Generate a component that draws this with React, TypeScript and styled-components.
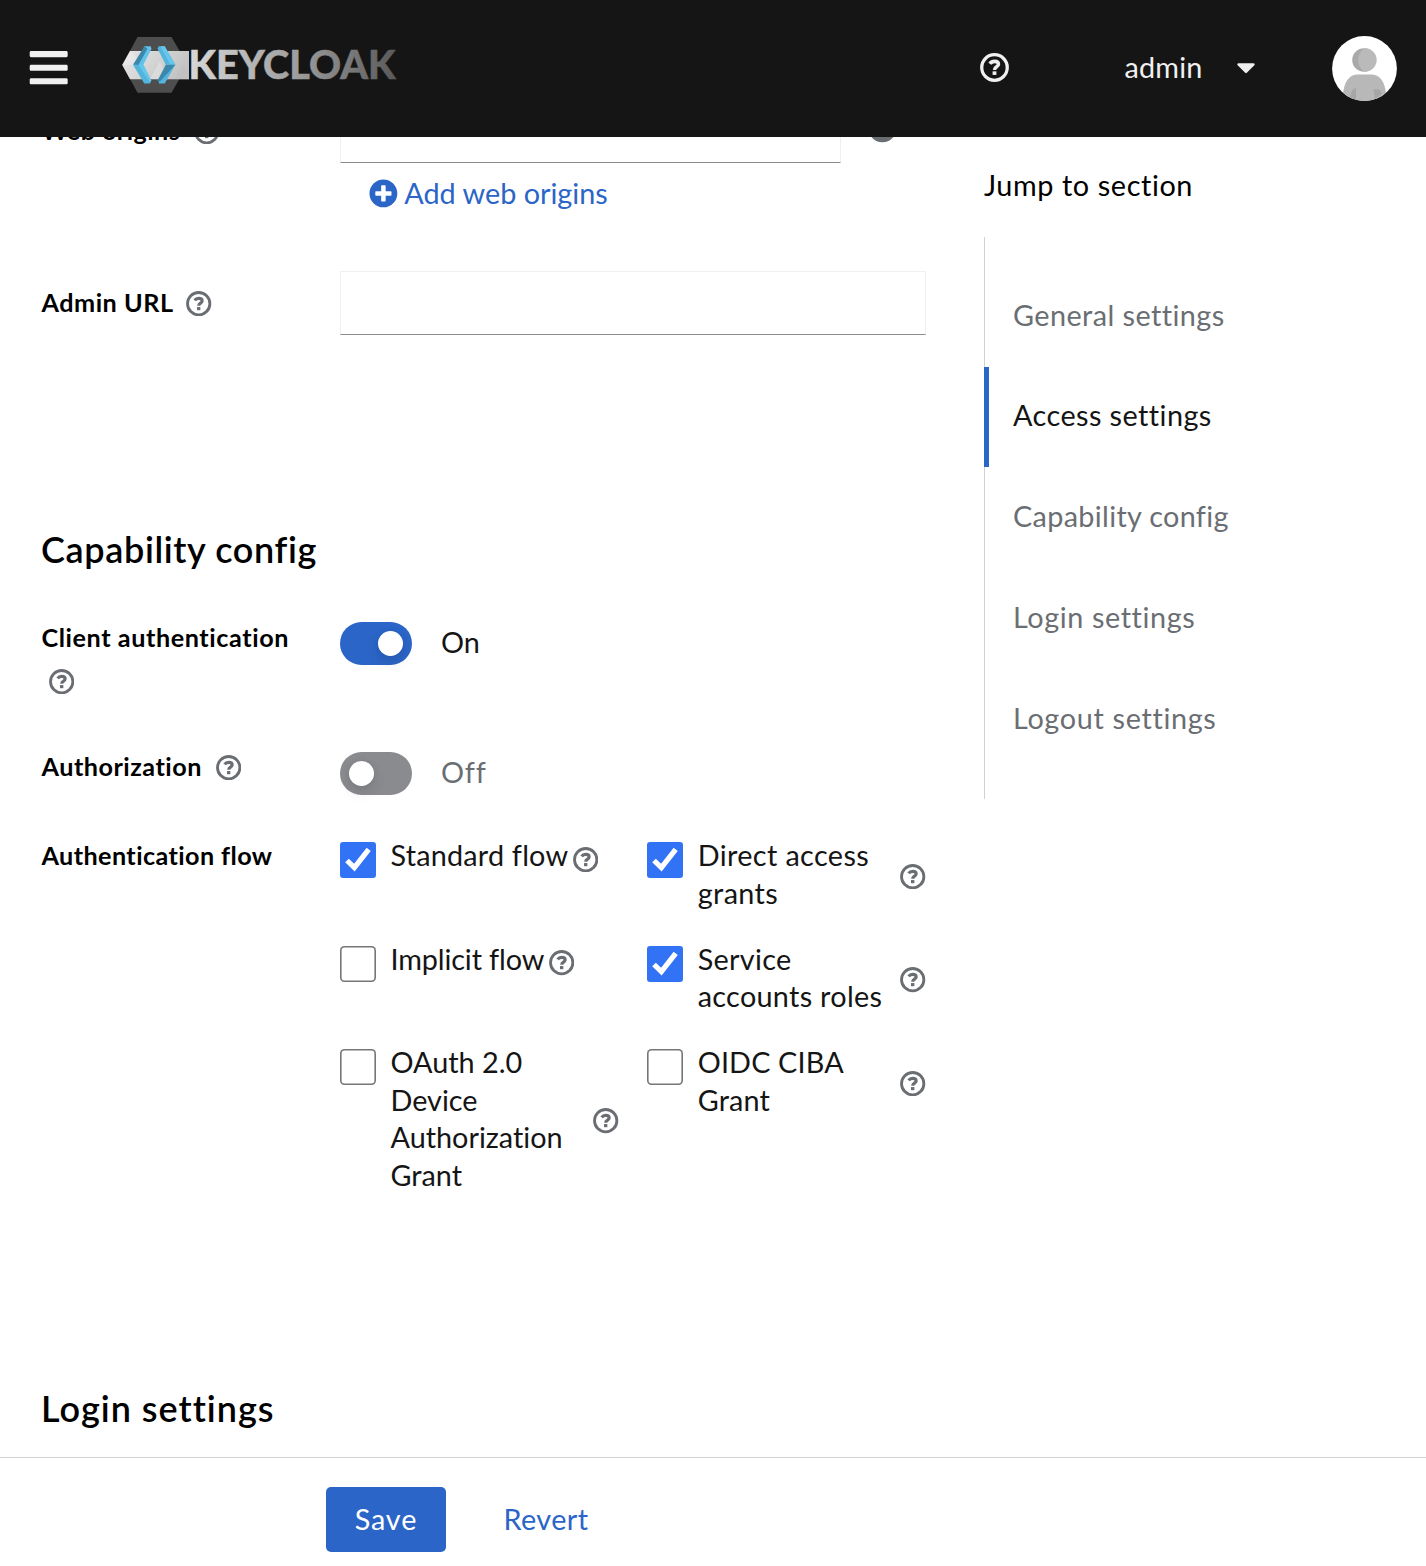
import React from "react";
import styled, { createGlobalStyle } from "styled-components";
import { FaBars, FaCaretDown, FaMinusCircle, FaPlusCircle } from "react-icons/fa";

const blue = "#2b65c7";
const gray = "#6a6e73";

const GlobalStyle = createGlobalStyle`
  *, *::before { box-sizing: border-box; }
  body {
    margin: 0;
    background: #fff;
    color: #151515;
    font-family: Lato, "Open Sans", sans-serif;
    font-size: 28.8px;
    line-height: 43.2px;
    font-variant-ligatures: none;
  }
  svg { display: block; flex: none; }
`;

const Page = styled.div`
  display: flex;
  flex-direction: column;
  height: 1566px;
  overflow: hidden;
`;

const Header = styled.header`
  display: flex;
  align-items: center;
  flex: none;
  height: 137px;
  padding: 0 29px 0 30px;
  background: #151515;
  color: #f0f0f0;
`;

const MenuButton = styled.div`
  display: flex;
  justify-content: center;
  width: 38px;
  margin: 0 53px 2px 0;
`;

const LogoArt = styled.svg`
  margin-bottom: 7px;
`;

const HelpButton = styled.div`
  margin: 0 115.5px 2px auto;
`;

const UserMenu = styled.div`
  display: flex;
  align-items: center;
  gap: 28.5px;
  width: 207.5px;
  padding-bottom: 2px;
`;

const AvatarArt = styled.svg`
  margin-top: 0.5px;
`;

const Track = styled.span<{ $track?: number }>`
  letter-spacing: ${(p) => p.$track ?? 0}px;
`;

const Main = styled.main`
  display: grid;
  grid-template-columns: 984px 1fr;
  flex: none;
  height: 1320px;
  overflow: hidden;
`;

const Form = styled.div`
  margin-top: -38px;
  padding-left: 41px;
`;

const Row = styled.div<{ $height: number }>`
  display: grid;
  grid-template-columns: 299px 586px;
  align-items: start;
  height: ${(p) => p.$height}px;
`;

const Label = styled.div<{ $track: number; $top?: number }>`
  padding: ${(p) => p.$top ?? 0}px 28px 0 0.5px;
  color: #000;
  font-size: 25.2px;
  font-weight: 700;
  letter-spacing: ${(p) => p.$track}px;
`;

const QuestionArt = styled.svg`
  color: inherit;
`;

const LabelHelp = styled.span`
  display: inline-block;
  margin-left: 7px;
  vertical-align: -4px;
  line-height: 0;
  color: ${gray};
`;

const Input = styled.input`
  display: block;
  width: 100%;
  height: 64px;
  border: 1px solid #f0f0f0;
  border-bottom-color: #8a8d90;
  background: #fff;
`;

const OriginLine = styled.div`
  display: grid;
  grid-template-columns: 501px 29px;
  column-gap: 27px;
  align-items: center;
  color: ${gray};
  svg { margin-bottom: 5px; }
`;

const AddButton = styled.div`
  display: flex;
  align-items: center;
  gap: 6.5px;
  margin: 9px 0 0 29px;
  color: ${blue};
`;

const Heading = styled.h1<{ $top: number; $bottom: number; $track: number }>`
  margin: ${(p) => p.$top}px 0 ${(p) => p.$bottom}px;
  color: #000;
  font-size: 36px;
  font-weight: 600;
  line-height: 47px;
  letter-spacing: ${(p) => p.$track}px;
`;

const Switch = styled.div<{ $on: boolean }>`
  display: flex;
  align-items: center;
  gap: 29px;
  padding-top: 7px;
  color: ${(p) => (p.$on ? "#151515" : gray)};
`;

const SwitchTrack = styled.div<{ $on: boolean }>`
  display: flex;
  align-items: center;
  justify-content: ${(p) => (p.$on ? "flex-end" : "flex-start")};
  width: 72px;
  height: 43px;
  padding: 0 9px;
  border-radius: 22px;
  background: ${(p) => (p.$on ? blue : "#8a8b8f")};
`;

const Knob = styled.div`
  width: 25px;
  height: 25px;
  border-radius: 50%;
  background: #fff;
  box-shadow: 0 7px 14px rgba(3, 3, 3, 0.1), 0 0 7px rgba(3, 3, 3, 0.06);
`;

const SwitchText = styled.span<{ $track: number }>`
  padding-bottom: 3px;
  letter-spacing: ${(p) => p.$track}px;
  line-height: 40px;
`;

const FlowGrid = styled.div`
  display: grid;
  grid-template-columns: 278.6px 278.6px;
  gap: 28.6px;
  align-items: start;
  padding-top: 3px;
`;

const FlowItem = styled.div`
  display: flex;
  align-items: center;
`;

const Box = styled.div<{ $checked: boolean }>`
  flex: none;
  align-self: flex-start;
  width: 36px;
  height: 36px;
  margin: 5px 14.5px 0 0;
  border-radius: ${(p) => (p.$checked ? 3 : 4.5)}px;
  background: ${(p) => (p.$checked ? "#3273f6" : "#fff")};
  box-shadow: ${(p) => (p.$checked ? "none" : "inset 0 0 0 1.6px #767676")};
`;

const FlowText = styled.span<{ $track: number }>`
  align-self: flex-start;
  line-height: 37.5px;
  letter-spacing: ${(p) => p.$track}px;
`;

const FlowHelp = styled.span`
  margin: 4px 0 0 4.5px;
  color: ${gray};
`;

const Jump = styled.nav`
  padding-top: 27px;
  color: #000;
`;

const JumpList = styled.ul`
  height: 562px;
  margin: 30px 0 0;
  padding: 28.6px 0;
  list-style: none;
  box-shadow: inset 1px 0 #d2d2d2;
`;

const JumpItem = styled.li<{ $active: boolean; $track: number }>`
  display: flex;
  align-items: center;
  height: 100.8px;
  padding: 0 0 2px 24px;
  border-left: 5px solid ${(p) => (p.$active ? blue : "transparent")};
  color: ${(p) => (p.$active ? "#151515" : gray)};
  letter-spacing: ${(p) => p.$track}px;
`;

const Footer = styled.footer`
  display: flex;
  align-items: flex-start;
  flex: none;
  height: 109px;
  padding: 29px 0 0 326px;
  border-top: 1px solid #d2d2d2;
`;

const Button = styled.button<{ $primary?: boolean }>`
  display: flex;
  justify-content: center;
  width: ${(p) => (p.$primary ? 120 : 200)}px;
  height: 65px;
  padding: 10.5px 0 0;
  border: 0;
  border-radius: 5px;
  background: ${(p) => (p.$primary ? blue : "transparent")};
  color: ${(p) => (p.$primary ? "#fff" : blue)};
  font: inherit;
`;

function Question({ size = 25.4 }: { size?: number }) {
  return (
    <QuestionArt width={size} height={size} viewBox="0 0 25 25" fill="none" stroke="currentColor">
      <circle cx="12.5" cy="12.5" r="11" strokeWidth="2.8" />
      <path d="M8.500 9.300C9.500 7.800 10.900 7.200 12.600 7.200c2 0 3.300 1 3.300 2.600 0 2.300-3.400 2-3.400 4.800" strokeWidth="3.100" />
      <path d="M12.500 15.800v3.100" strokeWidth="3.300" />
    </QuestionArt>
  );
}

function Logo() {
  return (
    <LogoArt width="276" height="58" viewBox="121 36 276 58">
      <defs>
        <linearGradient id="word" gradientUnits="userSpaceOnUse" x1="191" y1="60" x2="395" y2="70">
          <stop offset="0" stopColor="#d6d6d6" />
          <stop offset="0.5" stopColor="#a0a0a0" />
          <stop offset="1" stopColor="#5a5a5a" />
        </linearGradient>
        <linearGradient id="band" x1="0" y1="0" x2="1" y2="0.3">
          <stop offset="0" stopColor="#e6e6e6" />
          <stop offset="1" stopColor="#c4c4c4" />
        </linearGradient>
      </defs>
      <path fill="#4d4d4d" d="M137.500 37h34l16 27.800-16 28h-34l-15-28z" />
      <path fill="url(#band)" d="M130 51h59v28.200h-59l-7.800-14.300z" />
      <path fill="#fff" opacity=".25" d="M122.200 64.900l7.800-13.900 15 14zM150 79.200l10-18 8 18z" />
      <path fill="#bbb" opacity=".3" d="M176 79.200l6-14 7 5v9.200z" />
      <path fill="#62c3ea" d="M144.500 46.300h6.200l.8 2.500-8.200 16-4.800 2-3-2z" />
      <path fill="#3a88ab" d="M144.500 46.300l3 2.400-9.200 16.500-5.300-.4z" />
      <path fill="#53b5de" d="M133 64.800h10.300l8 16-1.500 2.700h-5.500z" />
      <path fill="#66c6ec" d="M138.500 64.800h4.800l8 16-1.500 1.200z" />
      <path fill="#53b5de" d="M158.500 46.300h6.200l10.600 18.500h-9.500l-8.200-16z" />
      <path fill="#66c6ec" d="M160.500 46.300h4.200l10.600 18.500h-5z" />
      <path fill="#53b5de" d="M175.300 64.800l-10.500 18.700h-5.800l-.5-3 8.500-14z" />
      <path fill="#3a88ab" d="M165.800 64.800h9.500l-15.300 16.700-2.600-.8z" />
      <text
        x="188.500"
        y="79.300"
        fill="url(#word)"
        stroke="url(#word)"
        strokeWidth="0.500"
        fontFamily="Lato, sans-serif"
        fontSize="39"
        fontWeight="900"
        textLength="207"
        lengthAdjust="spacingAndGlyphs"
      >
        KEYCLOAK
      </text>
    </LogoArt>
  );
}

function Avatar() {
  return (
    <AvatarArt width="65" height="65" viewBox="0 0 65 65">
      <clipPath id="face">
        <circle cx="32.5" cy="32.5" r="32.4" />
      </clipPath>
      <g clipPath="url(#face)">
        <rect width="65" height="65" fill="#fff" />
        <circle cx="32" cy="24" r="11.8" fill="#a9a9a9" />
        <path fill="#bababa" d="M33 12.300a11.700 11.700 0 0 1 0 23.400c-9-4-9-19 0-23.400z" />
        <path fill="#b8b8b8" d="M11 65V58c1-12 6-19.500 15-19.500h13c9 0 14 7.500 15 19.500v7z" />
        <path fill="#a6a6a6" d="M18.500 65c-1-6 1-12 5.500-13v13zM41.500 53.500c6-1 8.500 2 8 5L43 63z" />
      </g>
    </AvatarArt>
  );
}

function Toggle({ on }: { on: boolean }) {
  return (
    <Switch $on={on}>
      <SwitchTrack $on={on}>
        <Knob />
      </SwitchTrack>
      <SwitchText $track={on ? 0 : 0.9}>{on ? "On" : "Off"}</SwitchText>
    </Switch>
  );
}

function FieldLabel({ text, track, top, help = true }: { text: string; track: number; top?: number; help?: boolean }) {
  return (
    <Label $track={track} $top={top}>
      {text}{" "}
      {help && (
        <LabelHelp>
          <Question />
        </LabelHelp>
      )}
    </Label>
  );
}

const flows = [
  { text: "Standard flow", checked: true, track: 0.2 },
  { text: "Direct access grants", checked: true, track: 0.38 },
  { text: "Implicit flow", checked: false, track: -0.13 },
  { text: "Service accounts roles", checked: true, track: 0.3 },
  { text: "OAuth 2.0 Device Authorization Grant", checked: false, track: 0 },
  { text: "OIDC CIBA Grant", checked: false, track: 0.15 },
];

const sections = [
  { text: "General settings", track: 0.43 },
  { text: "Access settings", track: 0.43 },
  { text: "Capability config", track: 0.33 },
  { text: "Login settings", track: 0.6 },
  { text: "Logout settings", track: 0.67 },
];

export default function App() {
  return (
    <Page>
      <GlobalStyle />
      <Header>
        <MenuButton>
          <FaBars size={43.4} />
        </MenuButton>
        <Logo />
        <HelpButton>
          <Question size={29} />
        </HelpButton>
        <UserMenu>
          <Track $track={0.2}>admin</Track>
          <FaCaretDown size={30} />
        </UserMenu>
        <Avatar />
      </Header>
      <Main>
        <Form>
          <Row $height={172}>
            <FieldLabel text="Web origins" track={0.42} top={10} />
            <div>
              <OriginLine>
                <Input />
                <FaMinusCircle size={28.8} />
              </OriginLine>
              <AddButton>
                <FaPlusCircle size={28.8} />
                <Track>Add web origins</Track>
              </AddButton>
            </div>
          </Row>
          <Row $height={64}>
            <FieldLabel text="Admin URL" track={0.52} top={10} />
            <Input />
          </Row>
          <Heading $top={191} $bottom={42} $track={0.63}>
            Capability config
          </Heading>
          <Row $height={130}>
            <FieldLabel text="Client authentication" track={0.58} top={1} />
            <Toggle on />
          </Row>
          <Row $height={89}>
            <FieldLabel text="Authorization" track={0.5} />
            <Toggle on={false} />
          </Row>
          <Row $height={551}>
            <FieldLabel text="Authentication flow" track={0.4} help={false} />
            <FlowGrid>
              {flows.map((f) => (
                <FlowItem key={f.text}>
                  <Box $checked={f.checked}>
                    {f.checked && (
                      <svg width="36" height="36" viewBox="0 0 36 36">
                        <path d="M7 18.500l7.400 7.200L28.700 7.400" fill="none" stroke="#fff" strokeWidth="5.2" />
                      </svg>
                    )}
                  </Box>
                  <FlowText $track={f.track}>{f.text}</FlowText>
                  <FlowHelp>
                    <Question />
                  </FlowHelp>
                </FlowItem>
              ))}
            </FlowGrid>
          </Row>
          <Heading $top={0} $bottom={0} $track={1}>
            Login settings
          </Heading>
        </Form>
        <Jump>
          <Track $track={0.6}>Jump to section</Track>
          <JumpList>
            {sections.map((s) => (
              <JumpItem key={s.text} $active={s.text === "Access settings"} $track={s.track}>
                {s.text}
              </JumpItem>
            ))}
          </JumpList>
        </Jump>
      </Main>
      <Footer>
        <Button $primary>
          <Track $track={0.9}>Save</Track>
        </Button>
        <Button>
          <Track $track={0.4}>Revert</Track>
        </Button>
      </Footer>
    </Page>
  );
}
